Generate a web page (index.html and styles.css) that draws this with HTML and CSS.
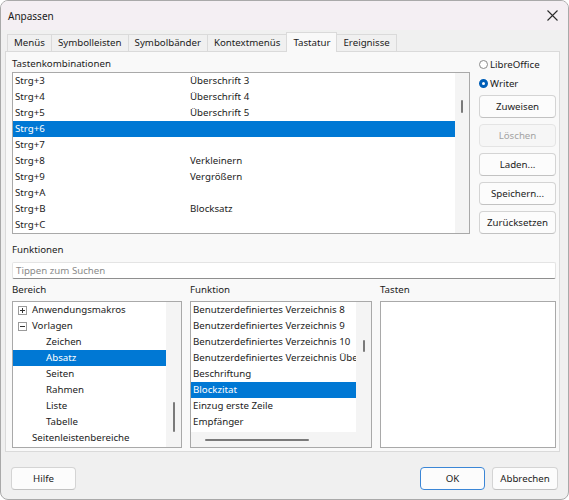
FILE: index.html
```html
<!DOCTYPE html>
<html lang="de">
<head>
  <title>Anpassen</title>
  <link rel="stylesheet" href="styles.css">
</head>

<body>
  <div class="window">
    <!-- Title bar -->
    <div class="titlebar">
      <span class="title">Anpassen</span>
      <svg class="close" width="11" height="11" viewBox="0 0 11 11">
        <path d="M0.5 0.5 L10.5 10.5 M10.5 0.5 L0.5 10.5" stroke="#2b2b2b" stroke-width="1.1" fill="none"/>
      </svg>
    </div>

    <!-- Tabs -->
    <div class="tabs">
      <div class="tab">Menüs</div>
      <div class="tab">Symbolleisten</div>
      <div class="tab">Symbolbänder</div>
      <div class="tab">Kontextmenüs</div>
      <div class="tab active">Tastatur</div>
      <div class="tab">Ereignisse</div>
    </div>

    <!-- Tab panel -->
    <div class="panel">
      <div class="top">
        <div class="keys-col">
          <div class="label">Tastenkombinationen</div>
          <div class="listbox keys">
            <div class="rows">
              <div class="row"><span class="key">Strg+3</span><span>Überschrift 3</span></div>
              <div class="row"><span class="key">Strg+4</span><span>Überschrift 4</span></div>
              <div class="row"><span class="key">Strg+5</span><span>Überschrift 5</span></div>
              <div class="row selected"><span class="key">Strg+6</span><span></span></div>
              <div class="row"><span class="key">Strg+7</span><span></span></div>
              <div class="row"><span class="key">Strg+8</span><span>Verkleinern</span></div>
              <div class="row"><span class="key">Strg+9</span><span>Vergrößern</span></div>
              <div class="row"><span class="key">Strg+A</span><span></span></div>
              <div class="row"><span class="key">Strg+B</span><span>Blocksatz</span></div>
              <div class="row"><span class="key">Strg+C</span><span></span></div>
            </div>
            <div class="vscroll keys-scroll"><div class="thumb"></div></div>
          </div>
        </div>

        <div class="side">
          <label class="radio"><span class="dot"></span>LibreOffice</label>
          <label class="radio"><span class="dot checked"></span>Writer</label>
          <div class="buttons">
            <div class="btn">Zuweisen</div>
            <div class="btn disabled">Löschen</div>
            <div class="btn">Laden...</div>
            <div class="btn">Speichern...</div>
            <div class="btn">Zurücksetzen</div>
          </div>
        </div>
      </div>

      <div class="label funcs-label">Funktionen</div>
      <div class="search">Tippen zum Suchen</div>

      <div class="bottom">
        <div class="label">Bereich</div>
        <div class="label">Funktion</div>
        <div class="label">Tasten</div>

        <div class="listbox tree">
          <div class="rows">
            <div class="row"><svg class="exp" width="9" height="9" viewBox="0 0 9 9"><rect x="0.5" y="0.5" width="8" height="8" fill="#fff" stroke="#9a9a9a"/><path d="M2 4.5 H7 M4.5 2 V7" stroke="#333"/></svg>Anwendungsmakros</div>
            <div class="row"><svg class="exp" width="9" height="9" viewBox="0 0 9 9"><rect x="0.5" y="0.5" width="8" height="8" fill="#fff" stroke="#9a9a9a"/><path d="M2 4.5 H7" stroke="#333"/></svg>Vorlagen</div>
            <div class="row child">Zeichen</div>
            <div class="row child selected">Absatz</div>
            <div class="row child">Seiten</div>
            <div class="row child">Rahmen</div>
            <div class="row child">Liste</div>
            <div class="row child">Tabelle</div>
            <div class="row top-level">Seitenleistenbereiche</div>
          </div>
          <div class="vscroll tree-scroll"><div class="thumb"></div></div>
        </div>

        <div class="listbox func">
          <div class="rows">
            <div class="row">Benutzerdefiniertes Verzeichnis 8</div>
            <div class="row">Benutzerdefiniertes Verzeichnis 9</div>
            <div class="row">Benutzerdefiniertes Verzeichnis 10</div>
            <div class="row">Benutzerdefiniertes Verzeichnis Übe</div>
            <div class="row">Beschriftung</div>
            <div class="row selected">Blockzitat</div>
            <div class="row">Einzug erste Zeile</div>
            <div class="row">Empfänger</div>
          </div>
          <div class="vscroll func-scroll"><div class="thumb"></div></div>
          <div class="hscroll"><div class="thumb"></div></div>
          <div class="corner"></div>
        </div>

        <div class="listbox keys-box"></div>
      </div>
    </div>

    <!-- Dialog buttons -->
    <div class="footer">
      <div class="btn">Hilfe</div>
      <div class="spacer"></div>
      <div class="btn default">OK</div>
      <div class="btn">Abbrechen</div>
    </div>
  </div>
</body>
</html>
```

FILE: styles.css
```css
body {
  margin: 0;
  background: #ffffff;
  font-family: "Noto Sans", "Open Sans", sans-serif;
  font-size: 9.7px;
  color: #1b1b1b;
}

.window {
  width: 569px;
  height: 500px;
  box-sizing: border-box;
  border: 1px solid #a9a9a9;
  border-radius: 8px;
  background: #f0f0f0;
  overflow: hidden;
  display: flex;
  flex-direction: column;
}

/* Title bar */
.titlebar {
  height: 29px;
  flex: none;
  background: #f4eff3;
  display: flex;
  align-items: center;
  justify-content: space-between;
  padding: 0 10px 0 7px;
}

.title {
  font-size: 10px;
}

/* Tabs */
.tabs {
  display: flex;
  align-items: flex-end;
  margin: 2px 0 0 6px;
  height: 20px;
  position: relative;
  z-index: 1;
}

.tab {
  height: 17px;
  line-height: 16px;
  box-sizing: border-box;
  padding: 0 6px;
  border: 1px solid #dadada;
  border-bottom: none;
  margin-left: -1px;
  background: #f0f0f0;
  margin-bottom: 1px;
}

.tab:first-child {
  margin-left: 0;
}

.tab.active {
  height: 20px;
  line-height: 19px;
  margin-bottom: 0;
  background: #f9f9f9;
  padding: 0 6px;
}

/* Panel */
.panel {
  margin: -1px 8px 0 4px;
  height: 401px;
  box-sizing: border-box;
  border: 1px solid #dadada;
  background: #f9f9f9;
  padding: 5px 3px 3px 6px;
  display: flex;
  flex-direction: column;
}

.label {
  height: 14px;
  line-height: 14px;
}

.top {
  display: flex;
  gap: 9px;
}

.keys-col {
  flex: 1;
  display: flex;
  flex-direction: column;
  gap: 1px;
}

.listbox {
  background: #ffffff;
  border: 1px solid #a9a9a9;
  box-sizing: border-box;
  overflow: hidden;
}

.keys {
  height: 162px;
  display: flex;
}

.rows {
  flex: 1;
  min-width: 0;
}

.row {
  height: 16px;
  line-height: 16px;
  padding-left: 2px;
  white-space: nowrap;
  overflow: hidden;
  display: flex;
  align-items: center;
}

.row.selected {
  background: #0078d4;
  color: #ffffff;
}

.key {
  width: 175px;
  flex: none;
}

.vscroll {
  width: 14px;
  flex: none;
  background: #f4f4f4;
  display: flex;
  justify-content: center;
}

.thumb {
  background: #7a7a7a;
  border-radius: 1px;
}

.vscroll .thumb {
  width: 2px;
}

.keys-scroll .thumb {
  height: 13px;
  margin-top: 27px;
}

/* Side buttons */
.side {
  width: 77px;
  display: flex;
  flex-direction: column;
}

.radio {
  height: 14px;
  display: flex;
  align-items: center;
  gap: 2px;
  margin-bottom: 5px;
}

.dot {
  width: 9px;
  height: 9px;
  box-sizing: border-box;
  border-radius: 50%;
  border: 1px solid #8a8a8a;
  background: #ffffff;
}

.dot.checked {
  border: 3px solid #005fb8;
}

.buttons {
  display: flex;
  flex-direction: column;
  gap: 6px;
}

.btn {
  height: 23px;
  box-sizing: border-box;
  border: 1px solid #d4d4d4;
  border-bottom-color: #c2c2c2;
  border-radius: 4px;
  background: #fcfcfc;
  display: flex;
  align-items: center;
  justify-content: center;
}

.btn.disabled {
  color: #a3a3a3;
  border-color: #e4e4e4;
  background: #f6f6f6;
}

/* Functions */
.funcs-label {
  margin-top: 9px;
}

.search {
  margin-top: 5px;
  height: 17px;
  line-height: 15px;
  box-sizing: border-box;
  border: 1px solid #e4e4e4;
  border-bottom-color: #8f8f8f;
  border-radius: 2px;
  background: #ffffff;
  color: #8a8a8a;
  padding-left: 3px;
}

.bottom {
  margin-top: 4px;
  display: grid;
  grid-template-columns: 170px 182px 1fr;
  grid-template-rows: 14px 147px;
  column-gap: 8px;
  row-gap: 4px;
}

.tree {
  display: flex;
}

.tree .row {
  padding-left: 5px;
}

.exp {
  margin-right: 5px;
  flex: none;
}

.tree .row.child {
  padding-left: 33px;
}

.tree .row.top-level {
  padding-left: 19px;
}

.tree-scroll {
  width: 15px;
}

.tree-scroll .thumb {
  height: 30px;
  margin-top: 100px;
}

.func {
  display: grid;
  grid-template-columns: 1fr 15px;
  grid-template-rows: 130px 15px;
}

.func .vscroll {
  width: 15px;
}

.func-scroll .thumb {
  height: 12px;
  margin-top: 38px;
}

.hscroll {
  background: #f4f4f4;
  display: flex;
  align-items: center;
}

.hscroll .thumb {
  height: 2px;
  width: 104px;
  margin-left: 14px;
}

.corner {
  background: #f4f4f4;
}

/* Footer */
.footer {
  display: flex;
  gap: 7px;
  padding: 15px 10px 0 10px;
}

.footer .btn {
  width: 65px;
}

.footer .btn:last-child {
  width: 66px;
}

.spacer {
  flex: 1;
}

.btn.default {
  border-color: #3b86d6;
}
```
